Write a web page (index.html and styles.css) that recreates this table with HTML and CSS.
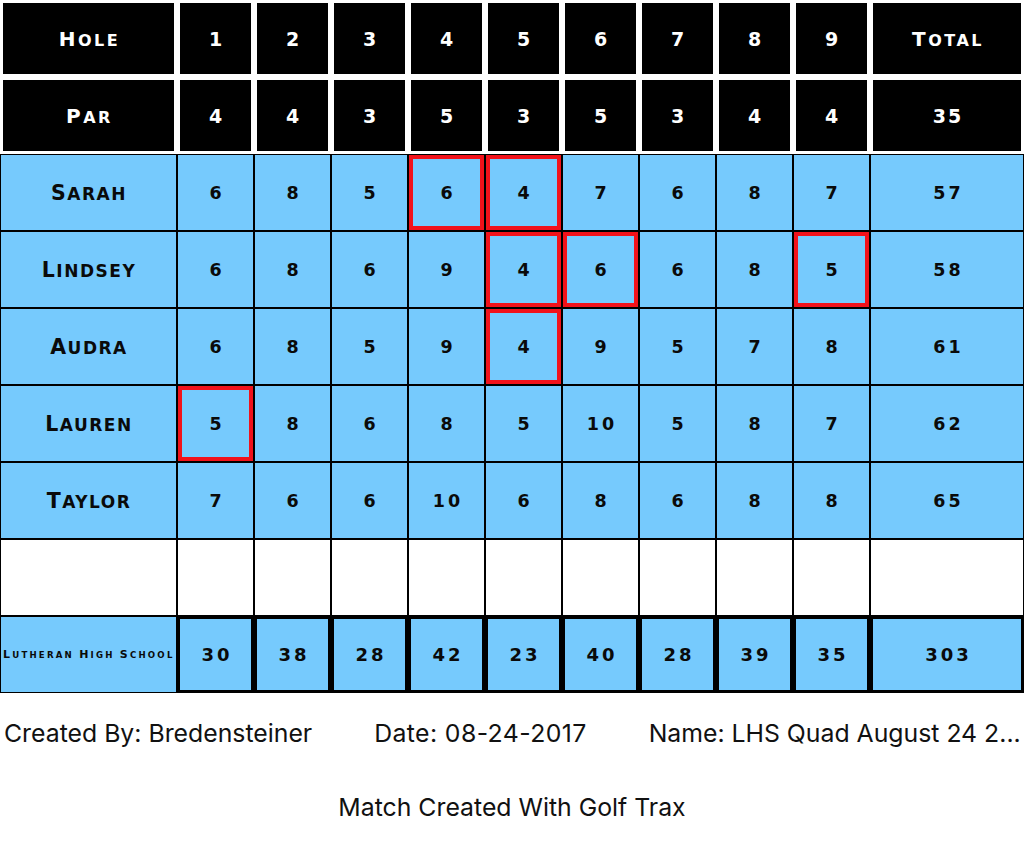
FILE: index.html
```html
<!DOCTYPE html>
<html>
<head>
<meta charset="utf-8">
<link rel="stylesheet" href="styles.css">
</head>
<body>
<div class="card">
  <div class="grid">
    <div class="hdr label"><span><span class="c">H</span>ole</span></div>
    <div class="hdr">1</div><div class="hdr">2</div><div class="hdr">3</div><div class="hdr">4</div><div class="hdr">5</div><div class="hdr">6</div><div class="hdr">7</div><div class="hdr">8</div><div class="hdr">9</div>
    <div class="hdr label"><span><span class="c">T</span>otal</span></div>

    <div class="hdr label"><span><span class="c">P</span>ar</span></div>
    <div class="hdr">4</div><div class="hdr">4</div><div class="hdr">3</div><div class="hdr">5</div><div class="hdr">3</div><div class="hdr">5</div><div class="hdr">3</div><div class="hdr">4</div><div class="hdr">4</div>
    <div class="hdr">35</div>

    <div class="cell name"><span><span class="c">S</span>arah</span></div>
    <div class="cell">6</div><div class="cell">8</div><div class="cell">5</div><div class="cell hl">6</div><div class="cell hl">4</div><div class="cell">7</div><div class="cell">6</div><div class="cell">8</div><div class="cell">7</div>
    <div class="cell">57</div>

    <div class="cell name"><span><span class="c">L</span>indsey</span></div>
    <div class="cell">6</div><div class="cell">8</div><div class="cell">6</div><div class="cell">9</div><div class="cell hl">4</div><div class="cell hl">6</div><div class="cell">6</div><div class="cell">8</div><div class="cell hl">5</div>
    <div class="cell">58</div>

    <div class="cell name"><span><span class="c">A</span>udra</span></div>
    <div class="cell">6</div><div class="cell">8</div><div class="cell">5</div><div class="cell">9</div><div class="cell hl">4</div><div class="cell">9</div><div class="cell">5</div><div class="cell">7</div><div class="cell">8</div>
    <div class="cell">61</div>

    <div class="cell name"><span><span class="c">L</span>auren</span></div>
    <div class="cell hl">5</div><div class="cell">8</div><div class="cell">6</div><div class="cell">8</div><div class="cell">5</div><div class="cell">10</div><div class="cell">5</div><div class="cell">8</div><div class="cell">7</div>
    <div class="cell">62</div>

    <div class="cell name"><span><span class="c">T</span>aylor</span></div>
    <div class="cell">7</div><div class="cell">6</div><div class="cell">6</div><div class="cell">10</div><div class="cell">6</div><div class="cell">8</div><div class="cell">6</div><div class="cell">8</div><div class="cell">8</div>
    <div class="cell">65</div>

    <div class="blank"></div><div class="blank"></div><div class="blank"></div><div class="blank"></div><div class="blank"></div><div class="blank"></div><div class="blank"></div><div class="blank"></div><div class="blank"></div><div class="blank"></div><div class="blank"></div>

    <div class="cell team"><span><span class="c">L</span>utheran <span class="c">H</span>igh <span class="c">S</span>chool</span></div>
    <div class="cell tot">30</div><div class="cell tot">38</div><div class="cell tot">28</div><div class="cell tot">42</div><div class="cell tot">23</div><div class="cell tot">40</div><div class="cell tot">28</div><div class="cell tot">39</div><div class="cell tot">35</div>
    <div class="cell tot">303</div>
  </div>

  <div class="meta">
    <span class="meta-item">Created By: Bredensteiner</span>
    <span class="meta-item meta-date">Date: 08-24-2017</span>
    <span class="meta-item">Name: LHS Quad August 24 2...</span>
  </div>
  <div class="credit">Match Created With Golf Trax</div>
</div>
</body>
</html>
```

FILE: styles.css
```css
html, body {
  margin: 0;
  padding: 0;
  background: #fff;
}

.card {
  width: 1024px;
  height: 846px;
  overflow: hidden;
}

.grid {
  display: grid;
  grid-template-columns: 177px repeat(9, 77px) 154px;
  grid-auto-rows: 77px;
}

.hdr,
.cell,
.blank {
  display: flex;
  align-items: center;
  justify-content: center;
  font-family: "DejaVu Sans", sans-serif;
  font-weight: bold;
  text-transform: uppercase;
  box-sizing: border-box;
  white-space: nowrap;
}

.hdr {
  margin: 3px;
  background: #000;
  color: #fff;
  font-size: 19px;
  letter-spacing: 2px;
  padding-left: 2px;
}

.hdr.label {
  font-size: 16px;
  letter-spacing: 2.5px;
}

.hdr.label .c {
  font-size: 20px;
}

.cell {
  background: #76cafd;
  border: 1px solid #000;
  color: #0a0a0a;
  font-size: 17.5px;
  letter-spacing: 3px;
  padding-left: 3px;
}

.cell.hl {
  box-shadow: inset 0 0 0 4px #f2121a;
}

.cell.name {
  font-size: 17px;
  letter-spacing: 1.5px;
  padding-left: 1px;
}

.cell.name .c {
  font-size: 20.5px;
}

.blank {
  background: #fff;
  border: 1px solid #000;
}

.cell.tot {
  border-width: 3px;
  font-size: 18px;
}

.cell.team {
  font-size: 8.6px;
  letter-spacing: 2.2px;
  justify-content: flex-start;
  padding-left: 2px;
}

.cell.team .c {
  font-size: 11px;
}

.meta {
  display: flex;
  gap: 62px;
  padding: 0 4px;
  height: 80px;
  align-items: center;
  font-family: "Inter", "Noto Sans", sans-serif;
  font-size: 24.8px;
  color: #111;
}

.meta-item {
  flex: none;
  white-space: nowrap;
}

.meta-date {
  letter-spacing: 0.4px;
}

.credit {
  margin-top: 19px;
  text-align: center;
  font-family: "Inter", "Noto Sans", sans-serif;
  font-size: 24.8px;
  color: #111;
  line-height: 30px;
}
```
